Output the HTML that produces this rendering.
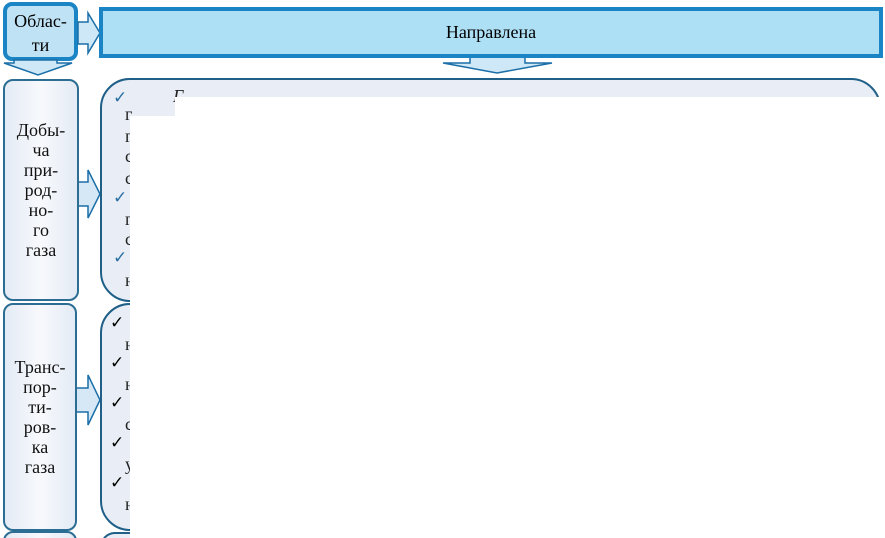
<!DOCTYPE html>
<html style="overflow:hidden;width:885px;height:538px"><head><meta charset="utf-8"><style>
html,body{margin:0;width:885px;height:538px;overflow:hidden;}
body{background:#fff;position:relative;font-family:"Liberation Serif",serif;}
.a{position:absolute;box-sizing:border-box;}
.lb{border:2px solid #2b6d93;border-radius:10px;background:linear-gradient(90deg,#e4ebf5,#f7f9fc 50%,#e4ebf5);text-align:center;font-size:18px;color:#111;display:flex;align-items:center;justify-content:center;}
.cb{border:2px solid #1f5f88;border-radius:30px;background:#e9eef6;}
.ck{position:absolute;font-size:17px;font-family:"DejaVu Sans",sans-serif;}
.lt{position:absolute;font-size:18px;color:#222;}
</style></head><body>
<div class="a" style="left:3px;top:2px;width:75px;height:59px;border:4px solid #1b84c5;border-radius:9px;background:#bfe3f5;text-align:center;font-size:18px;line-height:24px;padding-top:3px">Облас-<br>ти</div>
<svg class="a" style="left:0;top:0" width="885" height="538">
<polygon points="78,22 88,22 88,13 100,33 88,53 88,44 78,44" fill="#cfe8f7" stroke="#1b6fa8" stroke-width="1.5"/>
<polygon points="14,60 57,60 57,63 72,63 38,75 4,63 14,63" fill="#cfe8f7" stroke="#1b6fa8" stroke-width="1.5"/>
<polygon points="470,57 525,57 525,63 552,63 497,73 443,63 470,63" fill="#cfe8f7" stroke="#1b6fa8" stroke-width="1.5"/>
<polygon points="77,182 88,182 88,170 100,194 88,218 88,206 77,206" fill="#d6e8f6" stroke="#1b6fa8" stroke-width="1.5"/>
<polygon points="76,388 88,388 88,375 100,400 88,425 88,412 76,412" fill="#d6e8f6" stroke="#1b6fa8" stroke-width="1.5"/>
</svg>
<div class="a" style="left:99px;top:7px;width:784px;height:51px;border:4px solid #1b84c5;background:#aee0f5;text-align:center;font-size:18px;line-height:43px">Направлена</div>
<div class="a lb" style="left:3px;top:79px;width:76px;height:222px;line-height:20px">Добы-<br>ча<br>при-<br>род-<br>но-<br>го<br>газа</div>
<div class="a cb" style="left:100px;top:78px;width:781px;height:224px"></div>
<div class="a lb" style="left:3px;top:303px;width:74px;height:228px;line-height:20px">Транс-<br>пор-<br>ти-<br>ров-<br>ка<br>газа</div>
<div class="a cb" style="left:100px;top:303px;width:781px;height:228px"></div>
<div class="a lb" style="left:3px;top:531px;width:74px;height:30px"></div>
<div class="a cb" style="left:100px;top:532px;width:781px;height:30px"></div>
<span class="ck" style="left:113px;top:88px;color:#2a6ea3">✓</span>
<span class="ck" style="left:113px;top:188px;color:#2a6ea3">✓</span>
<span class="ck" style="left:113px;top:248px;color:#2a6ea3">✓</span>
<span class="lt" style="left:173px;top:86px;font-style:italic">Г</span>
<span class="lt" style="left:125px;top:104px">г</span><span class="lt" style="left:125px;top:126px">г</span><span class="lt" style="left:125px;top:146px">с</span><span class="lt" style="left:125px;top:168px">с</span><span class="lt" style="left:125px;top:209px">г</span><span class="lt" style="left:125px;top:229px">с</span><span class="lt" style="left:125px;top:270px">н</span>
<span class="ck" style="left:110px;top:313px">✓</span><span class="ck" style="left:110px;top:353px">✓</span><span class="ck" style="left:110px;top:393px">✓</span><span class="ck" style="left:110px;top:433px">✓</span><span class="ck" style="left:110px;top:473px">✓</span>
<span class="lt" style="left:125px;top:334px">н</span><span class="lt" style="left:125px;top:374px">н</span><span class="lt" style="left:125px;top:414px">с</span><span class="lt" style="left:125px;top:454px">у</span><span class="lt" style="left:125px;top:494px">н</span>
<div class="a" style="left:175px;top:97px;width:710px;height:441px;background:#fff"></div>
<div class="a" style="left:130px;top:116px;width:755px;height:422px;background:#fff"></div>
</body></html>
